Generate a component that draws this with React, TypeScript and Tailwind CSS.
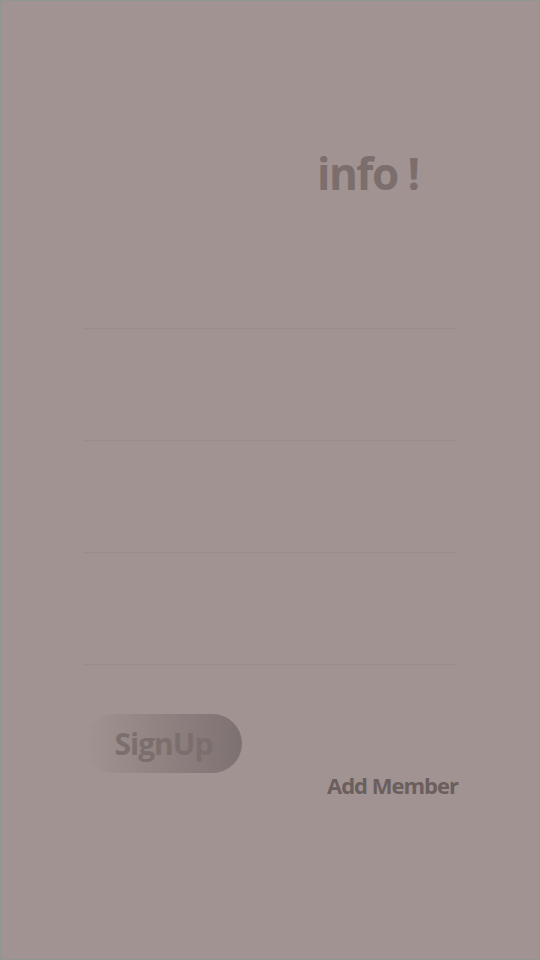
const fields = ["name", "email", "phone", "team"];

export default function App() {
  return (
    <div
      className="w-[540px] h-[960px] bg-[#a09391] border border-[#8e9794] flex flex-col"
      style={{ fontFamily: '"Open Sans", "Liberation Sans", sans-serif' }}
    >
      {/* Title */}
      <div className="pt-[144px] pl-[316px]">
        <h1 className="text-[44px] leading-[56px] font-bold tracking-[-1.5px] text-[#7b6e6d]">info !</h1>
      </div>

      {/* Input lines */}
      <div className="mt-[16px] mx-[82px] flex flex-col">
        {fields.map((f) => (
          <div key={f} className="h-[112px] border-b border-[#9c8b89]" />
        ))}
      </div>

      {/* Actions */}
      <div className="mt-[49px] pl-[84px]">
        <button className="w-[157px] h-[59px] rounded-full bg-gradient-to-r from-[#a09391] to-[#7e7171] text-[30px] font-bold tracking-[-1px] text-[#7b6f6e]">
          SignUp
        </button>
      </div>
      <div className="pl-[326px] -mt-[4px]">
        <span className="text-[22px] font-bold tracking-[-1px] text-[#6b5f5e]">Add Member</span>
      </div>
    </div>
  );
}
